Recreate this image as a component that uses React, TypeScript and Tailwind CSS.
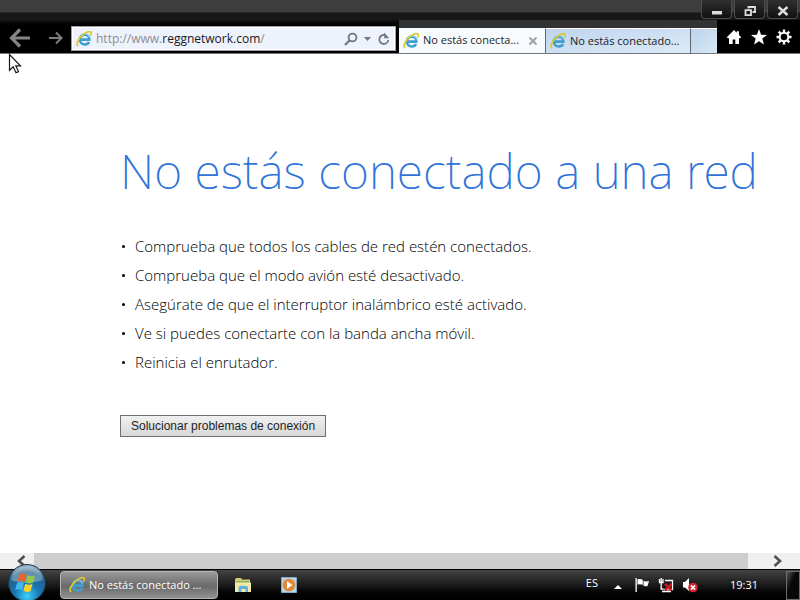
import type { ReactNode } from "react"

const tips = [
  "Comprueba que todos los cables de red estén conectados.",
  "Comprueba que el modo avión esté desactivado.",
  "Asegúrate de que el interruptor inalámbrico esté activado.",
  "Ve si puedes conectarte con la banda ancha móvil.",
  "Reinicia el enrutador.",
]

function ExplorerIcon() {
  return (
    <svg viewBox="0 0 16 16" className="h-4 w-4 shrink-0" fill="none">
      <path d="M4.400 8.600h8.900c.2-3.100-1.700-5-4.500-5-2.700 0-4.900 2.100-4.900 5s2.100 4.900 4.900 4.900c2 0 3.500-.9 4.200-2.500" stroke="#3f9fd2" strokeWidth="2.600" />
      <path d="M4 6.500C5 4.200 6.800 3 8.900 3c2.400 0 4.100 1.300 4.600 3.300" stroke="#8fd3ef" strokeWidth="1.200" />
      <path d="M2.200 15C-.3 13.400 2 8.400 6 4.600 9.600 1.200 13.800-.4 15 1.200c.6.8.3 2-.3 3.300" stroke="#dcc832" strokeWidth="1.800" />
    </svg>
  )
}

function WindowButton({ label, children }: { label: string; children: ReactNode }) {
  return (
    <button aria-label={label} className="flex h-[19px] w-[31px] items-center justify-center rounded-b-sm border border-t-0 border-[#4c4c4c] bg-linear-to-b from-[#303030] to-[#111111] pt-1">
      {children}
    </button>
  )
}

function WindowButtons() {
  return (
    <div className="flex gap-0.5">
      <WindowButton label="Minimizar">
        <svg viewBox="0 0 12 12" className="h-3 w-3"><path d="M1 6h10v3.500H1z" fill="#dedede" /></svg>
      </WindowButton>
      <WindowButton label="Restaurar">
        <svg viewBox="0 0 12 12" className="h-3 w-3" fill="none" stroke="#dedede" strokeWidth="1.800">
          <path d="M4.500 3.500V2H11v5H8.500" />
          <path d="M1.500 5.200H7v4.900H1.500z" />
        </svg>
      </WindowButton>
      <WindowButton label="Cerrar">
        <svg viewBox="0 0 12 12" className="h-3 w-3" stroke="#dedede" strokeWidth="2.400"><path d="m1.500 2 9 8M10.500 2l-9 8" /></svg>
      </WindowButton>
    </div>
  )
}

function NavButtons() {
  return (
    <div className="flex w-[71px] items-center gap-4 pt-0.5 pl-2">
      <button aria-label="Atrás">
        <svg viewBox="0 0 24 22" className="h-[22px] w-6" fill="none" stroke="#858585" strokeWidth="3.200"><path d="M22 11H4M12 2.500 3.500 11l8.500 8.500" /></svg>
      </button>
      <button aria-label="Adelante">
        <svg viewBox="0 0 16 14" className="h-3.5 w-4" fill="none" stroke="#7d7d7d" strokeWidth="2"><path d="M1 7h12M8 1.500 13.500 7 8 12.500" /></svg>
      </button>
    </div>
  )
}

function AddressBar() {
  return (
    <div className="mt-1.5 flex h-[25px] min-w-0 flex-1 items-center border border-[#9c9ca4] bg-[#eef2fb] pr-1 pl-1 ring-1 ring-black outline-1 -outline-offset-2 outline-white">
      <ExplorerIcon />
      <a href="#" className="ml-1 flex-1 truncate text-[12px] text-[#8b8d95]">
        http://www.<span className="text-[#16181d]">reggnetwork.com</span>/
      </a>
      <button aria-label="Buscar">
        <svg viewBox="0 0 14 14" className="h-3.5 w-3.5" fill="none" stroke="#74777d">
          <circle cx="8.500" cy="5.500" r="3.900" strokeWidth="1.800" />
          <path d="M5.500 8.500 1 13" strokeWidth="2.300" />
        </svg>
      </button>
      <button aria-label="Mostrar direcciones" className="ml-1.5">
        <svg viewBox="0 0 7 4" className="h-1 w-[7px]" fill="#74777d"><path d="M0 0h7L3.500 4z" /></svg>
      </button>
      <button aria-label="Actualizar" className="ml-1.5">
        <svg viewBox="0 0 14 14" className="h-3.5 w-3.5" fill="none">
          <path d="M11.300 8A4.500 4.500 0 1 1 8.500 3.300" stroke="#74777d" strokeWidth="1.800" />
          <path d="M7.200 0.500v5.800h5z" fill="#74777d" />
        </svg>
      </button>
    </div>
  )
}

function Tabs() {
  return (
    <div className="flex border-t-8 border-[#333333] text-[11px] text-[#1b1b1f]">
      <div className="flex w-[146px] items-center bg-[#f7fbfe] pr-2 pl-1">
        <ExplorerIcon />
        <span className="ml-1 flex-1 whitespace-nowrap">No estás conecta...</span>
        <button aria-label="Cerrar pestaña">
          <svg viewBox="0 0 8 8" className="h-2 w-2" stroke="#a0a0a0" strokeWidth="2"><path d="m.5.5 7 7M7.500.5l-7 7" /></svg>
        </button>
      </div>
      <button className="flex w-[145px] items-center border-t border-l border-t-white border-l-[#5f6870] bg-linear-to-br from-[#bfd4ed] to-[#dcebf8] pl-1 text-left">
        <ExplorerIcon />
        <span className="ml-1 whitespace-nowrap">No estás conectado...</span>
      </button>
      <button aria-label="Nueva pestaña" className="w-[27px] border-t border-l border-t-white border-l-[#5f6870] bg-linear-to-br from-[#bdd3ea] to-[#d8e8f6]" />
    </div>
  )
}

function Tools() {
  return (
    <div className="flex w-[83px] items-center justify-center gap-[9px] bg-black">
      <button aria-label="Inicio">
        <svg viewBox="0 0 16 16" className="h-4 w-4" fill="#ffffff"><path d="M8 1 .8 8.200l1.400 1.400.8-.8V15h3.700v-4.500h2.600V15H13V8.800l.8.8 1.400-1.400-2.200-2.200V2.200h-2.300v1.500z" /></svg>
      </button>
      <button aria-label="Favoritos">
        <svg viewBox="0 0 16 16" className="h-4 w-4" fill="#ffffff"><path d="m8 0 2.100 5.700 5.900.2-4.700 3.700 1.700 6L8 12.200l-5 3.400 1.700-6L0 5.900l5.900-.2z" /></svg>
      </button>
      <button aria-label="Herramientas">
        <svg viewBox="0 0 16 16" className="h-4 w-4" fill="none" stroke="#ffffff">
          <circle cx="8" cy="8" r="4.300" strokeWidth="2" />
          <path d="M8 .5v3M8 12.500v3M.5 8h3M12.500 8h3M2.700 2.700l2 2M11.300 11.300l2 2M13.300 2.700l-2 2M4.700 11.300l-2 2" strokeWidth="2.400" />
        </svg>
      </button>
    </div>
  )
}

function Pointer() {
  return (
    <svg viewBox="0 0 14 22" className="pointer-events-none absolute top-[53px] left-2 h-[22px] w-3.5">
      <path d="M1.500 1.500v15.800l3.700-3.500 2.800 6 2.500-1.200-2.700-5.800h4.700z" fill="#ffffff" stroke="#17171f" strokeWidth="1.200" />
    </svg>
  )
}

function ScrollBar() {
  return (
    <div className="flex h-4 items-stretch bg-[#efefef]">
      <button aria-label="Desplazar a la izquierda" className="flex w-[34px] items-center justify-end pr-2">
        <svg viewBox="0 0 10 12" className="h-3 w-2.5" fill="none" stroke="#4e4e4e" strokeWidth="2.600"><path d="M8.500 1 3 6l5.500 5" /></svg>
      </button>
      <div className="flex-1 bg-[#cdcdcd]" />
      <button aria-label="Desplazar a la derecha" className="flex w-[52px] items-center justify-center pl-2">
        <svg viewBox="0 0 10 12" className="h-3 w-2.5" fill="none" stroke="#4e4e4e" strokeWidth="2.600"><path d="M1.500 1 7 6l-5.500 5" /></svg>
      </button>
    </div>
  )
}

function StartButton() {
  return (
    <button aria-label="Inicio de Windows" className="relative w-[60px] self-stretch">
      <svg viewBox="0 0 40 40" className="absolute -top-[7px] left-[7px] h-10 w-10">
        <defs>
          <radialGradient id="orb" cx=".5" cy=".85" r=".85">
            <stop offset="0" stopColor="#3fd0f5" />
            <stop offset=".4" stopColor="#1676b4" />
            <stop offset=".75" stopColor="#255f88" />
            <stop offset="1" stopColor="#a9c4d4" />
          </radialGradient>
        </defs>
        <circle cx="20" cy="20" r="18.500" fill="url(#orb)" stroke="#1b3343" />
        <path d="M4 17C6 8 12 3.500 20 3.500S34 8 36 17c-9 3-23 4-32 0z" fill="#ffffff" opacity=".3" />
        <path d="M12.500 11.500c2.500-1.500 4.700-1.300 7 .1l-2 7.300c-2.300-1.300-4.500-1.500-7 0z" fill="#ed6325" />
        <path d="M20.700 12.200c2.300 1.400 4.700 1.500 7.300.2l-2 7.100c-2.700 1.300-4.900 1.200-7.300-.1z" fill="#96c93e" />
        <path d="M10 20c2.500-1.500 4.700-1.300 7 .1l-2 7.200c-2.300-1.300-4.500-1.400-7 0z" fill="#45b4ef" />
        <path d="M18.300 20.700c2.300 1.300 4.700 1.400 7.300.1l-2 7.200c-2.700 1.300-4.900 1.100-7.300-.2z" fill="#fbd12d" />
      </svg>
    </button>
  )
}

function Tray() {
  return (
    <div className="flex items-center text-[11px] text-white">
      <button className="-mt-1">ES</button>
      <button aria-label="Mostrar iconos ocultos" className="ml-4">
        <svg viewBox="0 0 8 4" className="mt-1 h-1 w-2" fill="#ffffff"><path d="M0 4h8L4 0z" /></svg>
      </button>
      <button aria-label="Centro de actividades" className="ml-3">
        <svg viewBox="0 0 16 16" className="h-4 w-4" fill="#ffffff">
          <path d="M1.500 1h1.300v14H1.500zM3.500 2.500c2-1 3.500-.4 5.300.3v5C7 7.200 5.500 6.900 3.500 7.700zM9.500 4c2 .7 3.500.6 5.500 0l-1.500 5c-1.500.4-2.700.3-4-.2z" />
        </svg>
      </button>
      <button aria-label="Red" className="ml-2">
        <svg viewBox="0 0 16 16" className="h-4 w-4" fill="none" stroke="#ffffff" strokeWidth="1.300">
          <path d="M1.500 2v3.500h3.500V2M3.200 1v4.500M3.200 5.500V12h2M7 3.500h7.500v9H5.500M4 14.500h9" />
          <path d="m7 7 6.500 6.500M13.500 7 7 13.500" stroke="#d8161c" strokeWidth="2.400" />
        </svg>
      </button>
      <button aria-label="Volumen" className="ml-2">
        <svg viewBox="0 0 16 16" className="h-4 w-4">
          <path d="M1 5h2l4-4v13l-4-3.500H1z" fill="#ffffff" />
          <circle cx="11" cy="10.500" r="4.800" fill="#d5252b" />
          <path d="m8.900 8.400 4.200 4.200m0-4.200-4.200 4.200" stroke="#ffffff" strokeWidth="1.500" />
        </svg>
      </button>
      <time className="ml-8">19:31</time>
      <button aria-label="Mostrar escritorio" className="ml-7 h-[29px] w-[14px] border border-[#6c6c6c] bg-linear-to-br from-[#5a5a5a] to-[#080808] to-40%" />
    </div>
  )
}

function TaskBar() {
  return (
    <footer className="flex h-[31px] items-center border-t border-black bg-linear-to-b from-[#444444] via-[#1b1b1b] via-50% to-black">
      <StartButton />
      <button className="flex h-7 w-[158px] items-center rounded-sm border border-[#b4b4b4] bg-linear-to-b from-[#9a9a9a] via-[#6a6a6a] via-55% to-[#919191] pl-2 text-[11px] text-white">
        <ExplorerIcon />
        <span className="ml-1 whitespace-nowrap">No estás conectado ...</span>
      </button>
      <button aria-label="Explorador de archivos" className="ml-4">
        <svg viewBox="0 0 18 16" className="h-4 w-[18px]">
          <path d="M1 2.500 2 1h5l1 1.500h8V15H1z" fill="#dcc66e" />
          <path d="M2 4h13v3H2z" fill="#7fb86e" />
          <path d="M1 5.500h16V15H1z" fill="#f6e9a4" />
          <path d="M4.500 15v-4c0-1.500 1-2.300 2.500-2.300h4.500c1.500 0 2.500.8 2.500 2.300v4h-2.500v-3h-4v3z" fill="#62b2df" />
        </svg>
      </button>
      <button aria-label="Reproductor multimedia" className="ml-7">
        <svg viewBox="0 0 18 18" className="h-[18px] w-[18px]">
          <path d="M1.500 1.500h15v15h-15z" fill="#b9d5e7" stroke="#83aac6" />
          <circle cx="9" cy="9" r="6.300" fill="#e08a35" />
          <path d="m7 5.200 5.500 3.800L7 12.800z" fill="#ffffff" />
        </svg>
      </button>
      <div className="flex-1" />
      <Tray />
    </footer>
  )
}

export default function App() {
  return (
    <div className="relative flex min-h-screen flex-col bg-white font-['Open_Sans',sans-serif]">
      <header className="bg-black">
        <div className="flex h-5 justify-end bg-linear-to-b from-[#3d3d3d] from-60% to-[#181818] to-65% pr-0.5">
          <WindowButtons />
        </div>
        <div className="flex h-[34px] border-b border-[#77777b] bg-black bg-linear-to-b from-[#151515] to-black to-25%">
          <NavButtons />
          <AddressBar />
          <div className="w-[3px]" />
          <Tabs />
          <Tools />
        </div>
      </header>
      <Pointer />
      <main className="flex-1 pt-[82px] pl-[120px]">
        <h1 className="font-['Noto_Sans',sans-serif] text-[48px] leading-[70px] font-extralight whitespace-nowrap text-[#2f73d9]">
          No estás conectado a una red
        </h1>
        <ul className="mt-[26px] list-none text-[15px] leading-[29px] font-light text-black">
          {tips.map((tip) => (
            <li key={tip} className="flex items-center gap-2.5">
              <span className="ml-0.5 h-[3px] w-[3px] rounded-full bg-black" />
              {tip}
            </li>
          ))}
        </ul>
        <button className="mt-[38px] h-[22px] border border-[#707070] bg-linear-to-b from-[#f0f0f0] to-[#d8d8d8] px-2.5 font-['Liberation_Sans',sans-serif] text-[12px] text-[#1f1f1f]">
          Solucionar problemas de conexión
        </button>
      </main>
      <ScrollBar />
      <TaskBar />
    </div>
  )
}
